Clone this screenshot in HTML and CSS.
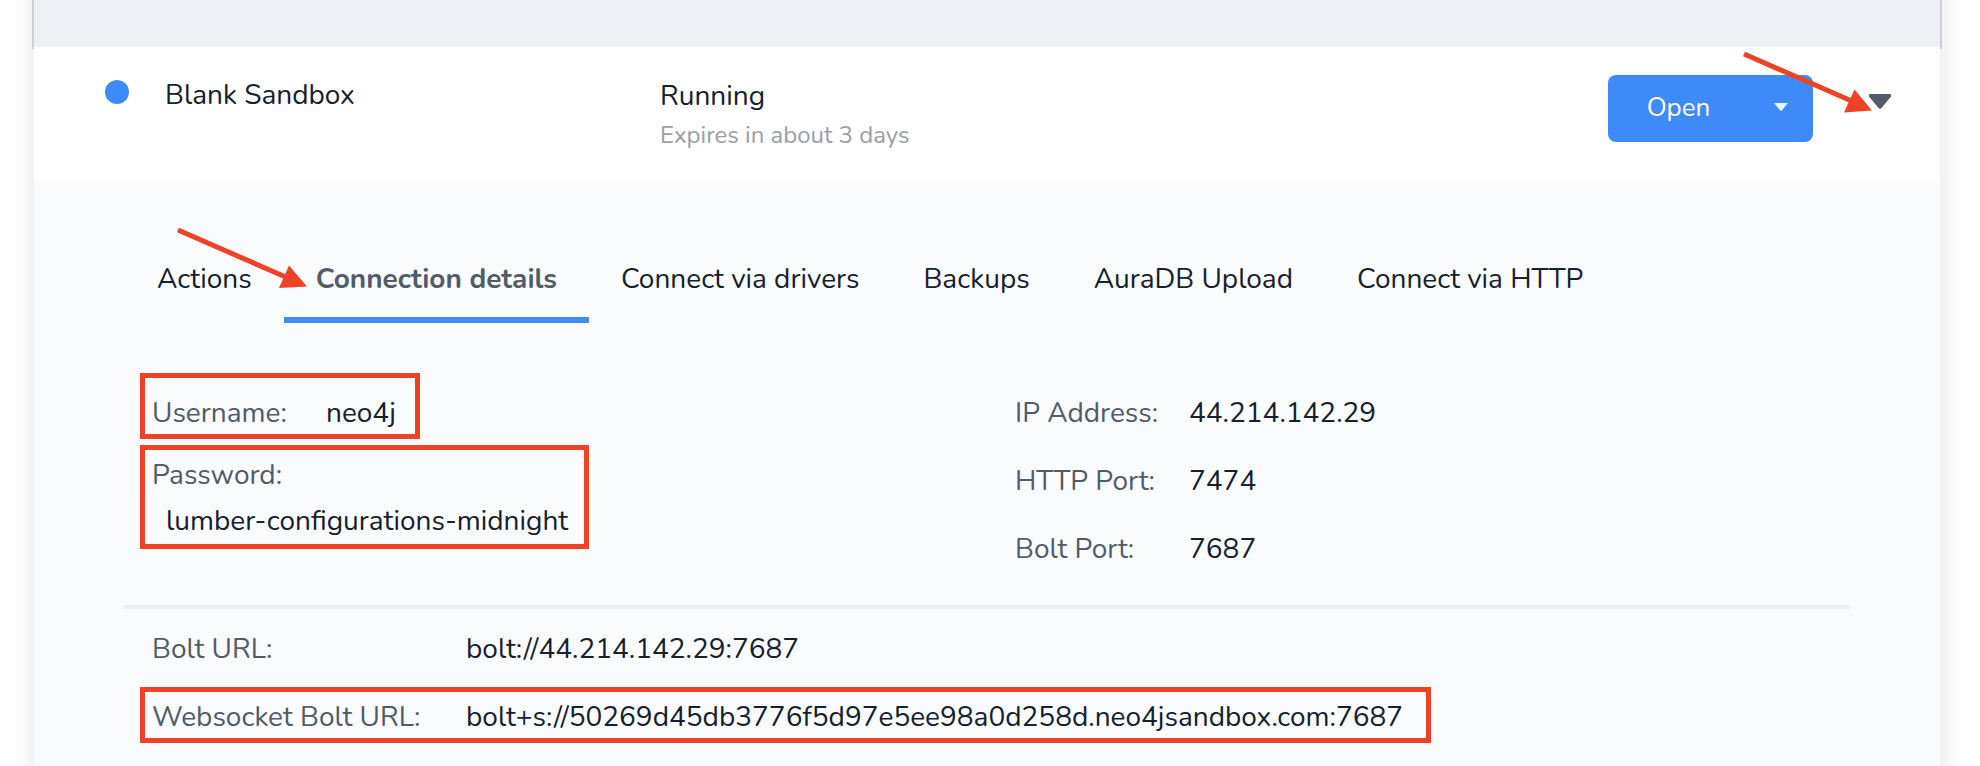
FILE: index.html
```html
<!DOCTYPE html>
<html lang="en">
<head>
<meta charset="utf-8">
<meta name="viewport" content="width=device-width, initial-scale=1">
<title>Sandbox</title>
<link rel="stylesheet" href="styles.css">
</head>
<body>
<main class="page">
  <div class="list-header"></div>
  <article class="sandbox">
    <header class="summary">
      <span class="status-dot"></span>
      <h1 class="name">Blank Sandbox</h1>
      <div class="state">
        <p class="state-title">Running</p>
        <p class="state-note">Expires in about 3 days</p>
      </div>
      <div class="open-group">
        <button class="open" type="button">Open</button>
        <button class="open-menu" type="button" aria-label="More ways to open">
          <svg width="14" height="8" viewBox="0 0 14 8"><path d="M1 0h12q1 0 .4.8L8 7.2q-1 1-2 0L.6.8Q0 0 1 0z" fill="#eef2fe"/></svg>
        </button>
      </div>
      <button class="toggle" type="button" aria-label="Collapse details">
        <svg width="22" height="15" viewBox="0 0 22 15"><path d="M1.500 0h19q1.500 0 1.500 1v1.500L12.500 14q-1.500 1.500-3 0L0 2.500V1q0-1 1.500-1z" fill="#535b69"/></svg>
      </button>
      <svg class="arrow arrow-toggle" width="131" height="62" viewBox="0 0 131 62"><path d="M2 2L112 50" stroke="#ec4226" stroke-width="5"/><path d="M130 58.500L112.500 37.500L102 60.500z" fill="#ec4226"/></svg>
    </header>
    <section class="details">
      <nav class="tabs">
        <a class="tab" href="#actions">Actions</a>
        <a class="tab active" href="#connection" aria-current="page">Connection details</a>
        <a class="tab" href="#drivers">Connect via drivers</a>
        <a class="tab" href="#backups">Backups</a>
        <a class="tab" href="#upload">AuraDB Upload</a>
        <a class="tab" href="#http">Connect via HTTP</a>
        <svg class="arrow arrow-tab" width="132" height="62" viewBox="0 0 132 62"><path d="M2 2L112 50" stroke="#ec4226" stroke-width="5"/><path d="M131 58.500L113 37.500L103 60z" fill="#ec4226"/></svg>
      </nav>
      <div class="columns">
        <dl class="credentials">
          <div class="marked username"><dt class="label">Username:</dt><dd class="value">neo4j</dd></div>
          <div class="marked password"><dt class="label">Password:</dt><dd class="value">lumber-configurations-midnight</dd></div>
        </dl>
        <dl class="ports">
          <div class="row"><dt class="label">IP Address:</dt><dd class="value">44.214.142.29</dd></div>
          <div class="row"><dt class="label">HTTP Port:</dt><dd class="value">7474</dd></div>
          <div class="row"><dt class="label">Bolt Port:</dt><dd class="value">7687</dd></div>
        </dl>
      </div>
      <dl class="urls">
        <div class="url"><dt class="label">Bolt URL:</dt><dd class="value">bolt://44.214.142.29:7687</dd></div>
        <div class="url marked"><dt class="label">Websocket Bolt URL:</dt><dd class="value">bolt+s://50269d45db3776f5d97e5ee98a0d258d.neo4jsandbox.com:7687</dd></div>
      </dl>
    </section>
  </article>
</main>
</body>
</html>
```
FILE: styles.css
```css
* { box-sizing: border-box; }
body {
  margin: 0;
  color: #17202c;
  font: 28px/46px Nunito, Lato, sans-serif;
}
h1, p, dl, dd { margin: 0; }
button { border: 0; padding: 0; background: none; font: inherit; color: inherit; }
svg { display: block; }

/* Soft shade along both sides of the list. */
.page {
  display: flex;
  flex-direction: column;
  min-height: 100vh;
  padding: 0 40px 0 34px;
  background: linear-gradient(to right,
    #fff 12px, #fafafa 24px, #f2f2f2 34px,
    #f2f2f2 calc(100% - 40px), #fafafa calc(100% - 30px), #fff calc(100% - 18px));
}
.list-header {
  flex: none;
  height: 49px;
  margin: 0 -2px;
  background: #eff0f6;
  border: solid #d0d0d3;
  border-width: 0 2px;
}
.sandbox {
  flex: 1;
  position: relative;
  display: flex;
  flex-direction: column;
  margin-top: -2px;
}

.summary {
  flex: none;
  position: relative;
  display: flex;
  align-items: flex-start;
  height: 134px;
  padding: 28px 49px 0 71px;
  background: #fff;
}
.status-dot { width: 24px; height: 24px; margin: 5px 36px 0 0; border-radius: 50%; background: #3e8af8; }
.name { width: 495px; font-size: 28px; font-weight: 400; line-height: 40px; }
.state { flex: 1; padding-top: 1px; line-height: 40px; }
.state-note { font-size: 24px; line-height: 38px; color: #9b9ea6; }
.open-group { display: flex; width: 205px; height: 67px; border-radius: 8px; background: #3e8af8; color: #fff; }
.open { flex: 1; padding-bottom: 2px; font-size: 26px; }
.open-menu { width: 64px; padding-bottom: 4px; display: grid; place-items: center; }
.toggle { margin: 19px 0 0 56px; }

.arrow { position: absolute; pointer-events: none; }
.arrow-toggle { right: 67px; top: 5px; }
.arrow-tab { left: 51px; top: -11px; }

.details { flex: 1; padding: 58px 90px 20px; background: #fafbfd; }
.tabs { position: relative; display: flex; margin-left: 1px; }
.tab {
  padding: 17px 32px 15px;
  border-bottom: 6px solid transparent;
  color: inherit;
  text-decoration: none;
}
.active { border-color: #3e8af8; color: #535a68; font-weight: 700; }

.columns { display: grid; grid-template-columns: 891px 1fr; padding: 50px 0 35px; border-bottom: 4px solid #eff0f6; }
.label, .value { padding-top: 4px; line-height: 42px; }
.label { color: #535a68; }
.marked { width: fit-content; border: 5px solid #ec4226; }
.credentials { display: grid; gap: 6px; align-content: start; padding-left: 16px; }
.username { display: flex; padding: 10px 19px 0 7px; }
.username .label, .row .label { width: 174px; }
.password { padding: 0 16px 2px 7px; }
.password .value { padding-left: 14px; }
.ports { display: grid; gap: 22px; align-content: start; padding-top: 15px; }
.row { display: flex; }
.urls { display: grid; gap: 12px; padding: 10px 0 0 16px; }
.url { display: flex; padding: 0 23px 0 7px; }
.url:not(.marked) { border: 5px solid transparent; }
.url .label { width: 314px; }
```
